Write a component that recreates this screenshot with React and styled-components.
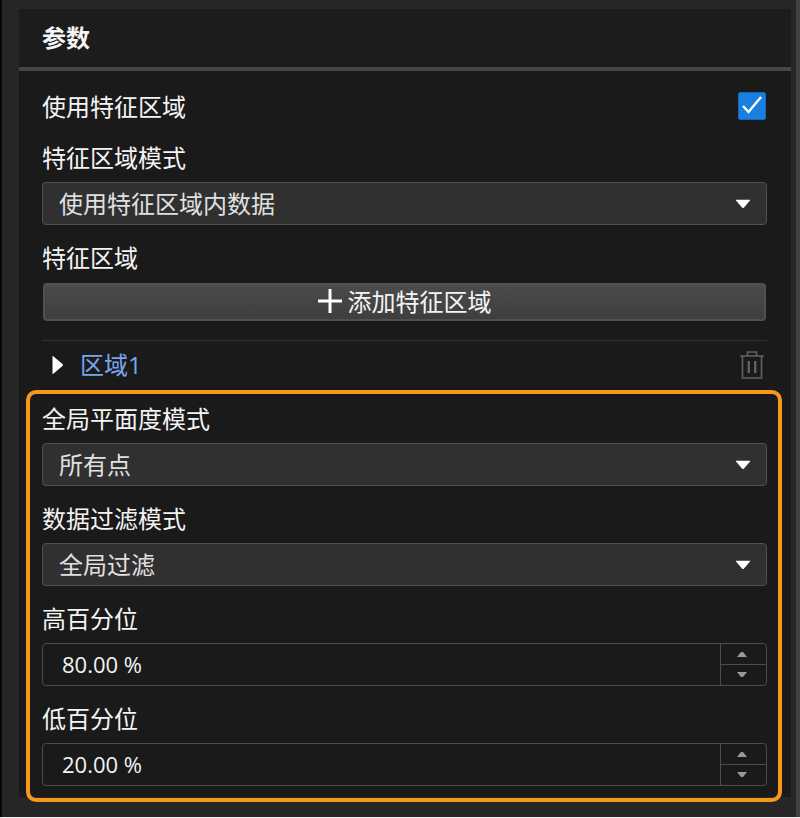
import React, { useState } from "react";
import styled, { createGlobalStyle } from "styled-components";

const GlobalStyle = createGlobalStyle`
  *, *::before, *::after { box-sizing: border-box; }
  body {
    margin: 0;
    background: #f0f0f0;
    color: #f4f4f4;
    font-family: "Noto Sans CJK SC", sans-serif;
    font-size: 24px;
    line-height: 28px;
  }
  button, input, select { font: inherit; color: inherit; margin: 0; }
`;

const Page = styled.main`
  min-height: calc(100vh - 1px);
  padding: 9px 5px 20px 17px;
  background: #262626;
  border-left: 2px solid #080808;
  border-right: 4px solid #424242;
`;

const Panel = styled.section`
  background: #1a1a1a;
`;

const PanelHeader = styled.header`
  padding: 14px 23px 16px;
  background: #1c1c1c;
  border-bottom: 4px solid #464646;
`;

const Title = styled.h1`
  margin: 0;
  font-size: 24px;
  line-height: 28px;
  font-weight: 700;
`;

const PanelBody = styled.div`
  display: flex;
  flex-direction: column;
  gap: 18px;
  padding: 21px 24px 11px 23px;
`;

const CheckRow = styled.div`
  display: flex;
  align-items: center;
  justify-content: space-between;
  padding-bottom: 5px;
`;

const Label = styled.label`
  display: block;
`;

const CheckControl = styled.span`
  display: grid;
  margin-right: 1px;

  > * { grid-area: 1 / 1; }
  svg { pointer-events: none; }
`;

const Checkbox = styled.input`
  appearance: none;
  width: 28px;
  height: 28px;
  border: 1px solid #1469bd;
  border-radius: 2px;
  background: ${(p) => (p.checked ? "#197fe0" : "#1a1a1a")};
`;

const Field = styled.div`
  display: flex;
  flex-direction: column;
  gap: 11px;
`;

const SelectBox = styled.div`
  display: grid;
  align-items: center;

  > * { grid-area: 1 / 1; }
  svg { justify-self: end; margin-right: 16px; pointer-events: none; }
`;

const Select = styled.select`
  appearance: none;
  width: 100%;
  height: 43px;
  padding: 0 48px 2px 16px;
  border: 1px solid #505050;
  border-radius: 4px;
  background: #303030;
  color: #e0e0e0;
`;

const AddButton = styled.button`
  display: flex;
  align-items: center;
  justify-content: center;
  gap: 6px;
  height: 38px;
  margin: 1px 1px 0;
  padding: 0 0 2px;
  border: 2px solid #505050;
  border-radius: 4px;
  background: linear-gradient(#4b4b4b, #3e3e3e);
`;

const RegionRow = styled.div`
  display: flex;
  align-items: center;
  justify-content: space-between;
  height: 49px;
  margin-top: 1px;
  border-top: 1px solid #333;
`;

const RegionToggle = styled.button`
  display: flex;
  align-items: center;
  gap: 16px;
  padding: 0 0 0 10px;
  border: 0;
  background: none;
  color: #7aa5ee;
  font-family: "Open Sans", "Noto Sans CJK SC", sans-serif;
`;

const IconButton = styled.button`
  display: flex;
  padding: 0;
  margin-right: 2px;
  border: 0;
  background: none;
`;

const Highlighted = styled.section`
  position: relative;
  display: flex;
  flex-direction: column;
  gap: 18px;
  margin-top: -3px;

  &::after {
    content: "";
    position: absolute;
    inset: -14px -15px -16px -16px;
    border: 4px solid #f7981d;
    border-radius: 10px;
    pointer-events: none;
  }
`;

const SpinBox = styled.div`
  display: flex;
  height: 43px;
  border: 1px solid #4c4c4c;
  border-radius: 4px;
`;

const SpinInput = styled.input`
  flex: 1;
  min-width: 0;
  padding: 0 0 1px 19px;
  border: 0;
  background: none;
  outline: none;
  font-family: "Open Sans", "Noto Sans CJK SC", sans-serif;
  font-size: 22px;
`;

const SpinButtons = styled.div`
  display: flex;
  flex-direction: column;
  width: 46px;
  border-left: 1px solid #4c4c4c;
`;

const SpinButton = styled.button`
  flex: 1;
  display: flex;
  align-items: center;
  justify-content: center;
  padding: 0 4px 0 0;
  border: 0;
  background: none;

  & + & { border-top: 1px solid #4c4c4c; }
`;

function DownArrow() {
  return (
    <svg width="16" height="10" viewBox="0 0 16 10" aria-hidden="true">
      <path d="M1 .8H15Q15.6.8 15 1.6L9 8.6Q8 9.6 7 8.6L1 1.6Q.4.8 1 .8Z" fill="#fff" />
    </svg>
  );
}

function SelectField({ id, label, option }) {
  return (
    <Field>
      <Label htmlFor={id}>{label}</Label>
      <SelectBox>
        <Select id={id}>
          <option>{option}</option>
        </Select>
        <DownArrow />
      </SelectBox>
    </Field>
  );
}

function PercentField({ id, label, initial }) {
  const [value, setValue] = useState(initial);
  const step = (delta) => setValue((v) => Math.min(100, Math.max(0, v + delta)));
  return (
    <Field>
      <Label htmlFor={id}>{label}</Label>
      <SpinBox>
        <SpinInput
          id={id}
          value={`${value.toFixed(2)} %`}
          onChange={(e) => setValue(parseFloat(e.target.value) || 0)}
        />
        <SpinButtons>
          <SpinButton type="button" aria-label={`${label} +`} onClick={() => step(1)}>
            <svg width="10" height="6" viewBox="0 0 10 6"><path d="M0 6L4 1H6L10 6Z" fill="#999" /></svg>
          </SpinButton>
          <SpinButton type="button" aria-label={`${label} -`} onClick={() => step(-1)}>
            <svg width="10" height="6" viewBox="0 0 10 6"><path d="M0 0H10L6 5H4Z" fill="#999" /></svg>
          </SpinButton>
        </SpinButtons>
      </SpinBox>
    </Field>
  );
}

export default function App() {
  const [useRegion, setUseRegion] = useState(true);
  return (
    <>
      <GlobalStyle />
      <Page>
        <Panel>
          <PanelHeader>
            <Title>参数</Title>
          </PanelHeader>
          <PanelBody>
            <CheckRow>
              <Label htmlFor="use-region">使用特征区域</Label>
              <CheckControl>
                <Checkbox
                  id="use-region"
                  type="checkbox"
                  checked={useRegion}
                  onChange={(e) => setUseRegion(e.target.checked)}
                />
                {useRegion && (
                  <svg width="28" height="28" viewBox="0 0 28 28" aria-hidden="true">
                    <path d="M5 14L10.5 20L23 5" fill="none" stroke="#fff" strokeWidth="2.4" />
                  </svg>
                )}
              </CheckControl>
            </CheckRow>
            <SelectField id="region-mode" label="特征区域模式" option="使用特征区域内数据" />
            <Field>
              <Label htmlFor="add-region">特征区域</Label>
              <AddButton id="add-region" type="button">
                <svg width="24" height="24" viewBox="0 0 24 24" aria-hidden="true">
                  <path d="M12 0V24M0 12H24" stroke="#fff" strokeWidth="3" />
                </svg>
                添加特征区域
              </AddButton>
            </Field>
            <RegionRow>
              <RegionToggle type="button">
                <svg width="12" height="20" viewBox="0 0 12 20" aria-hidden="true">
                  <path d="M.5 1.5Q.5.5 1.3 1.3L10.5 9Q11.5 10 10.5 11L1.3 18.7Q.5 19.5.5 18.5Z" fill="#fff" />
                </svg>
                区域1
              </RegionToggle>
              <IconButton type="button" aria-label="删除">
                <svg width="26" height="30" viewBox="0 0 26 30" fill="none" stroke="#626262" strokeWidth="1.6" aria-hidden="true">
                  <path d="M1 6H25M8.5 6V2H17.5V6M3.5 6V28H22.5V6" />
                  <path d="M9.8 11V23M16.2 11V23" strokeWidth="2.4" />
                </svg>
              </IconButton>
            </RegionRow>
            <Highlighted>
              <SelectField id="flatness-mode" label="全局平面度模式" option="所有点" />
              <SelectField id="filter-mode" label="数据过滤模式" option="全局过滤" />
              <PercentField id="high-percent" label="高百分位" initial={80} />
              <PercentField id="low-percent" label="低百分位" initial={20} />
            </Highlighted>
          </PanelBody>
        </Panel>
      </Page>
    </>
  );
}
